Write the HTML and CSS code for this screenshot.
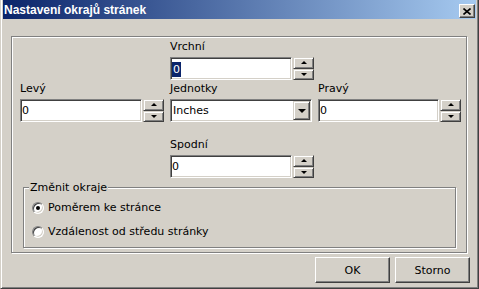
FILE: index.html
```html
<!DOCTYPE html>
<html lang="cs">
<head>
    <meta charset="UTF-8">
    <title>Nastavení okrajů stránek</title>
    <link rel="stylesheet" href="styles.css">
</head>
<body>
    <div class="window">
        <div class="titlebar">
            <span class="title">Nastavení okrajů stránek</span>
            <span class="close-btn">
                <svg width="8" height="7" viewBox="0 0 8 7"><path d="M0.5 0.5L7.5 6.5M7.5 0.5L0.5 6.5" stroke="#000" stroke-width="1.6" fill="none"/></svg>
            </span>
        </div>
        <div class="client">
            <div class="panel">
                <div class="fields">
                    <div class="field field-top">
                        <div class="label">Vrchní</div>
                        <div class="spin-edit">
                            <div class="edit"><span class="selected">0</span></div>
                            <div class="spin"><span class="spin-btn up"></span><span class="spin-btn down"></span></div>
                        </div>
                    </div>
                    <div class="field field-left">
                        <div class="label">Levý</div>
                        <div class="spin-edit">
                            <div class="edit">0</div>
                            <div class="spin"><span class="spin-btn up"></span><span class="spin-btn down"></span></div>
                        </div>
                    </div>
                    <div class="field field-units">
                        <div class="label">Jednotky</div>
                        <div class="select">
                            <span class="select-text">Inches</span>
                            <span class="drop-btn"></span>
                        </div>
                    </div>
                    <div class="field field-right">
                        <div class="label">Pravý</div>
                        <div class="spin-edit">
                            <div class="edit">0</div>
                            <div class="spin"><span class="spin-btn up"></span><span class="spin-btn down"></span></div>
                        </div>
                    </div>
                    <div class="field field-bottom">
                        <div class="label">Spodní</div>
                        <div class="spin-edit">
                            <div class="edit">0</div>
                            <div class="spin"><span class="spin-btn up"></span><span class="spin-btn down"></span></div>
                        </div>
                    </div>
                </div>

                <div class="group">
                    <div class="legend">Změnit okraje</div>
                    <div class="radio-row"><span class="radio checked"></span>Poměrem ke stránce</div>
                    <div class="radio-row second"><span class="radio"></span>Vzdálenost od středu stránky</div>
                </div>
            </div>

            <div class="buttons">
                <div class="button">OK</div>
                <div class="button">Storno</div>
            </div>
        </div>
    </div>
</body>
</html>
```

FILE: styles.css
```css
body {
    margin: 0;
    background-color: #d4d0c8;
    font-family: "DejaVu Sans", Verdana, sans-serif;
    font-size: 11px;
    color: #000;
}

.window {
    width: 479px;
    height: 289px;
    box-sizing: border-box;
    border: 1px solid;
    border-top: 0;
    border-color: #d4d0c8 #404040 #404040 #d4d0c8;
    box-shadow: inset 1px 0 0 #fff, inset -1px -1px 0 #808080;
    padding: 0 2px 2px 2px;
    background-color: #d4d0c8;
}

/* title bar */
.titlebar {
    height: 19px;
    display: flex;
    justify-content: space-between;
    background: linear-gradient(to right, #0a246a, #a6caf0);
    padding-left: 1px;
}

.title {
    font-family: "Liberation Sans", Arial, sans-serif;
    font-weight: bold;
    font-size: 12px;
    line-height: 19px;
    padding-top: 1px;
    color: #fff;
}

.close-btn {
    width: 16px;
    height: 14px;
    margin: 4px 1px 0 0;
    box-sizing: border-box;
    display: flex;
    align-items: center;
    justify-content: center;
    background-color: #d4d0c8;
    border: 1px solid;
    border-color: #fff #404040 #404040 #fff;
    box-shadow: inset -1px -1px 0 #808080;
}

/* client area */
.client {
    padding: 17px 0 0 8px;
}

.panel {
    width: 456px;
    height: 217px;
    box-sizing: border-box;
    border: 1px solid #808080;
    box-shadow: 1px 1px 0 #fff, inset 1px 1px 0 #fff;
    padding: 3px 0 0 8px;
}

.fields {
    display: grid;
    grid-template-columns: 150px 148px 143px;
}

.field-top { grid-column: 2; grid-row: 1; }
.field-left { grid-column: 1; grid-row: 2; margin-top: 2px; }
.field-units { grid-column: 2; grid-row: 2; margin-top: 2px; }
.field-right { grid-column: 3; grid-row: 2; margin-top: 2px; }
.field-bottom { grid-column: 2; grid-row: 3; margin-top: 16px; }

.label {
    line-height: 14px;
    margin-bottom: 3px;
}

.spin-edit {
    display: flex;
    gap: 1px;
}

.edit, .select {
    height: 23px;
    box-sizing: border-box;
    background-color: #fff;
    border: 1px solid;
    border-color: #808080 #fff #fff #808080;
    box-shadow: inset 1px 1px 0 #404040, inset -1px -1px 0 #d4d0c8;
}

.edit {
    width: 122px;
    padding-left: 1px;
    line-height: 21px;
}

.selected {
    display: inline-block;
    background-color: #0a246a;
    color: #fff;
    line-height: 15px;
    padding: 0 1px;
    vertical-align: middle;
}

.spin {
    display: flex;
    flex-direction: column;
    width: 21px;
}

.spin-btn {
    box-sizing: border-box;
    height: 11.5px;
    display: flex;
    align-items: center;
    justify-content: center;
    background-color: #d4d0c8;
    border: 1px solid;
    border-color: #d4d0c8 #404040 #404040 #d4d0c8;
    box-shadow: inset 1px 1px 0 #fff, inset -1px -1px 0 #808080;
}

.spin-btn::before {
    content: "";
    width: 0;
    height: 0;
    border-left: 3px solid transparent;
    border-right: 3px solid transparent;
}

.spin-btn.up::before {
    border-bottom: 3px solid #000;
}

.spin-btn.down::before {
    border-top: 3px solid #000;
}

.select {
    width: 142px;
    padding: 1px;
    display: flex;
}

.select-text {
    flex: 1;
    line-height: 19px;
    padding-left: 1px;
}

.drop-btn {
    width: 17px;
    height: 19px;
    box-sizing: border-box;
    display: flex;
    align-items: center;
    justify-content: center;
    background-color: #d4d0c8;
    border: 1px solid;
    border-color: #d4d0c8 #404040 #404040 #d4d0c8;
    box-shadow: inset 1px 1px 0 #fff, inset -1px -1px 0 #808080;
}

.drop-btn::before {
    content: "";
    width: 0;
    height: 0;
    border-left: 4px solid transparent;
    border-right: 4px solid transparent;
    border-top: 4px solid #000;
}

/* group box */
.group {
    width: 433px;
    height: 61px;
    box-sizing: border-box;
    margin: 9px 0 0 3px;
    border: 1px solid #808080;
    box-shadow: 1px 1px 0 #fff, inset 1px 1px 0 #fff;
}

.legend {
    width: max-content;
    margin: -7px 0 0 5px;
    padding: 0 1px;
    line-height: 14px;
    background-color: #d4d0c8;
}

.radio-row {
    display: flex;
    align-items: center;
    gap: 4px;
    line-height: 14px;
    margin-top: 6px;
    padding-left: 8px;
}

.radio-row.second {
    margin-top: 10px;
}

.radio {
    width: 12px;
    height: 12px;
    box-sizing: border-box;
    border-radius: 50%;
    background-color: #fff;
    border: 1px solid;
    border-color: #808080 #fff #fff #808080;
    box-shadow: inset 1px 1px 0 #404040, inset -1px -1px 0 #d4d0c8;
    display: flex;
    align-items: center;
    justify-content: center;
}

.radio.checked::after {
    content: "";
    width: 4px;
    height: 4px;
    border-radius: 50%;
    background-color: #000;
}

/* dialog buttons */
.buttons {
    display: flex;
    justify-content: flex-end;
    gap: 5px;
    margin-top: 4px;
    padding-right: 6px;
}

.button {
    width: 75px;
    height: 26px;
    box-sizing: border-box;
    display: flex;
    align-items: center;
    justify-content: center;
    background-color: #d4d0c8;
    border: 1px solid;
    border-color: #fff #404040 #404040 #fff;
    box-shadow: inset -1px -1px 0 #808080;
}
```
